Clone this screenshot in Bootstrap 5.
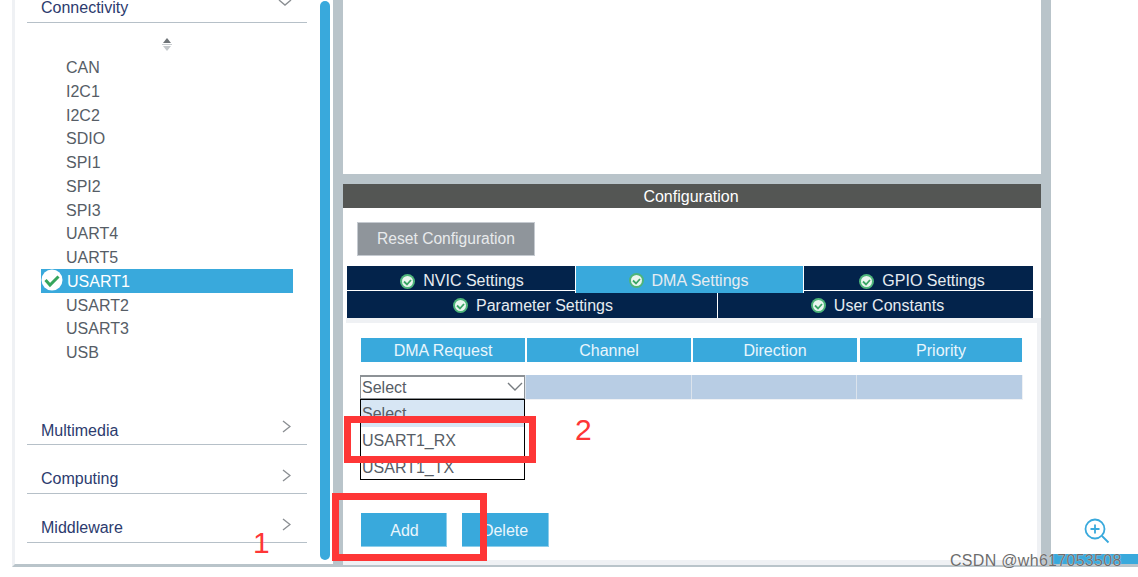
<!DOCTYPE html>
<html lang="en">

<head>
  <meta charset="UTF-8">
  <title>DMA Settings</title>
  <link href="https://cdn.jsdelivr.net/npm/bootstrap@5.3.0/dist/css/bootstrap.min.css" rel="stylesheet">
  <style>
    body {
      background: #fff;
      font-family: "Liberation Sans", Arial, sans-serif;
      font-size: 16px;
      width: 1138px;
      height: 577px;
      overflow: hidden;
      position: relative;
    }

    .app-root { width: 1138px; height: 577px; }

    /* left side */
    .left-wrap { width: 321px; margin-left: 12px; height: 567px; border-left: 3px solid #eff1f4; border-bottom: 3px solid #b9c4ca; }
    .left-panel { flex: 1; padding: 0 26px 0 12px; }
    .scroll-track { width: 16px; padding: 0 3px; height: 567px; border-bottom: 3px solid #b9c4ca; margin-left: -16px; }
    .scroll-thumb { width: 10px; height: 559px; background: #39a9dc; border-radius: 5px; margin-top: 1px; }
    .cat-head { border-bottom: 1px solid #b6c0c8; color: #2c3b6e; padding-left: 14px; padding-right: 16px; height: 23px; line-height: 16px; }
    .cat-head.cat-next { height: 24px; line-height: 18px; margin-top: 25px; }
    .cat-head.cat-next svg { margin-top: -1px; }
    .cat-head.multi-first { line-height: 20px; margin-top: 56.4px; }
    .chev-down { margin-right: -1px; }
    .sort-arrows { height: 19.4px; margin-top: 14px; }
    .periph-item { height: 23.7px; line-height: 23.7px; padding-left: 25px; margin-left: 14px; color: #565d66; }
    .periph-item.is-on { background: #39a9dc; color: #fff; height: 24px; line-height: 25px; margin-top: -.6px; margin-bottom: .6px; margin-right: 14px; padding-left: 26px; position: relative; }
    .periph-item.is-on svg { position: absolute; left: 0; top: 0; }

    /* center */
    .gutter { background: #b9c4ca; width: 10px; height: 567px; }
    .main-col { width: 698px; height: 567px; border-bottom: 2px solid #b9c4ca; }
    .top-blank { height: 174px; background: #fff; }
    .top-gap { height: 10px; background: #b9c4ca; margin-left: -1px; margin-right: -1px; }
    .conf-title { height: 24px; line-height: 25px; background: #545654; color: #fff; text-align: center; padding-right: 2px; }
    .conf-body { height: 357px; padding-top: 14px; }
    .reset-btn { display: block; width: 178px; height: 34px; margin-left: 14px; padding: 0; border: 1px solid #c5cad0; border-radius: 0; background: #8f959b; color: #e8eaec; font-size: 15.6px; }
    .reset-btn:hover { background: #8f959b; color: #e8eaec; border-color: #c5cad0; }
    .tab-block { margin: 10px 8px 0 4px; height: 52px; }
    .tab-line { height: 25px; }
    .tab-line + .tab-line { height: 27px; }
    .tab-cell { background: #03234b; color: #e6ecf1; display: flex; align-items: center; justify-content: center; gap: 8px; border-bottom: 1px solid #fff; padding-top: 6px; }
    .tab-line + .tab-line .tab-cell { border-bottom: 0; padding-top: 2px; }
    .tab-a { width: 228px; padding-left: 2px; }
    .tab-b { width: 229px; background: #39a9dc; height: 27px; z-index: 1; border-bottom: 0; border-left: 1px solid #fff; border-right: 1px solid #fff; padding-top: 2px; padding-right: 2px; }
    .tab-c { flex: 1; padding-left: 7px; }
    .tab-d { width: 370px; padding-left: 2px; }
    .tab-e { flex: 1; border-left: 1px solid #fff; padding-left: 4px; }
    .tab-panel { margin-left: 3px; border: solid #eff1f4; border-width: 5px 4px 0 0; height: 242px; padding: 15px 0 0 15px; position: relative; }
    .panel-foot { height: 5px; background: #eff1f4; }
    .dma-head { gap: 2px; width: 661px; }
    .dma-head > div { background: #39a9dc; color: #e9f6fc; text-align: center; height: 24px; line-height: 25px; flex: 0 0 164px; }
    .dma-head > div:last-child { flex: 0 0 162px; margin-left: 1px; }
    .dma-row { margin: 13px 0 0 -1px; width: 663px; height: 25px; position: relative; border-bottom: 1px solid #eff1f4; border-right: 1px solid #eff1f4; }
    .select-box { width: 165px; height: 25px; border: 1px solid #8d9296; border-top-width: 2px; border-bottom-width: 2px; background: #fff; color: #565d66; line-height: 21px; padding-left: 1px; position: relative; }
    .select-box svg { position: absolute; right: 1px; top: 5px; }
    .dma-cell { background: #b8cde4; height: 24px; flex: 1; border-left: 1px solid #dbe3ec; }
    .drop-list { position: absolute; left: 0; top: 24px; width: 165px; height: 81px; background: #fff; border: 1px solid #000; color: #565d66; z-index: 2; }
    .drop-list > div { height: 27px; line-height: 27px; padding-left: 1px; }
    .drop-list > div:first-child { background: #d7e6f4; }
    .action-row { margin-top: 113px; gap: 15px; }
    .action-btn { width: 87px; height: 34px; padding: 3px 0 0; border: 0; border-right: 1px solid #8ecdea; border-bottom: 1px solid #8ecdea; border-radius: 0; background: #39a9dc; color: #e9f6fc; font-size: 16px; }
    .action-btn:first-child { width: 86px; padding-left: 2px; }
    .action-btn:hover { background: #39a9dc; color: #e9f6fc; }

    /* right */
    .right-col { width: 87px; height: 567px; }
    .zoom-wrap { padding: 518px 0 0 33px; height: 554px; }
    .blue-strip { height: 10px; background: #39a9dc; }
    .grey-strip { height: 3px; background: #b9c4ca; }

    /* markup on top of the screenshot */
    .red-box { position: absolute; border: 7px solid #fe3636; z-index: 5; }
    .red-one { left: 344px; top: 416px; width: 192px; height: 47px; }
    .red-two { left: 332px; top: 493px; width: 155px; height: 68px; }
    .red-num { position: absolute; color: #fe3636; font-size: 30px; line-height: 30px; z-index: 5; }
    .num-one { left: 253px; top: 528px; }
    .num-two { left: 575px; top: 415px; }
    .csdn-mark { position: absolute; left: 950px; top: 552px; color: #6d6d6d; font-size: 16px; line-height: 18px; letter-spacing: .3px; text-shadow: 0 0 1px #fff; z-index: 6; }
  </style>
</head>

<body>
  <div class="app-root d-flex">
    <div class="left-wrap d-flex">
      <div class="left-panel">
        <div class="cat-head d-flex justify-content-between">
          <span>Connectivity</span>
          <svg width="14" height="8" viewBox="0 0 14 8" class="chev-down"><path d="M1 0l6 5 6-5" fill="none" stroke="#8b8f93" stroke-width="1.4"/></svg>
        </div>
        <div class="sort-arrows d-flex justify-content-center">
          <svg width="12" height="16" viewBox="0 0 12 16"><path d="M6 1l4 5H2z" fill="#6f7478"/><path d="M1 7h10v1H1z" fill="#c9cdd0"/><path d="M2 9h8l-4 5z" fill="#c4c8cb"/></svg>
        </div>
        <div class="periph-wrap">
          <div class="periph-item">CAN</div>
          <div class="periph-item">I2C1</div>
          <div class="periph-item">I2C2</div>
          <div class="periph-item">SDIO</div>
          <div class="periph-item">SPI1</div>
          <div class="periph-item">SPI2</div>
          <div class="periph-item">SPI3</div>
          <div class="periph-item">UART4</div>
          <div class="periph-item">UART5</div>
          <div class="periph-item is-on">
            <svg width="22" height="22" viewBox="0 0 22 22"><circle cx="11" cy="11" r="10.5" fill="#fff"/><path d="M4.5 11l4.500 5 8.500-8.500" fill="none" stroke="#36a55c" stroke-width="3"/></svg>
            USART1
          </div>
          <div class="periph-item">USART2</div>
          <div class="periph-item">USART3</div>
          <div class="periph-item">USB</div>
        </div>
        <div class="cat-head cat-next multi-first d-flex justify-content-between">
          <span>Multimedia</span>
          <svg width="9" height="14" viewBox="0 0 9 14"><path d="M1 1l7 5.500-7 5.500" fill="none" stroke="#8b8f93" stroke-width="1.400"/></svg>
        </div>
        <div class="cat-head cat-next d-flex justify-content-between">
          <span>Computing</span>
          <svg width="9" height="14" viewBox="0 0 9 14"><path d="M1 1l7 5.500-7 5.500" fill="none" stroke="#8b8f93" stroke-width="1.400"/></svg>
        </div>
        <div class="cat-head cat-next d-flex justify-content-between">
          <span>Middleware</span>
          <svg width="9" height="14" viewBox="0 0 9 14"><path d="M1 1l7 5.500-7 5.500" fill="none" stroke="#8b8f93" stroke-width="1.400"/></svg>
        </div>
      </div>
    </div>
    <div class="scroll-track flex-shrink-0"><div class="scroll-thumb"></div></div>
    <div class="gutter flex-shrink-0"></div>

    <div class="main-col flex-shrink-0">
      <div class="top-blank"></div>
      <div class="top-gap"></div>
      <div class="conf-title">Configuration</div>
      <div class="conf-body">
        <button class="btn reset-btn">Reset Configuration</button>
        <div class="tab-block">
          <div class="tab-line d-flex">
            <div class="tab-cell tab-a"><svg width="15" height="15" viewBox="0 0 15 15"><circle cx="7.5" cy="7.5" r="7.5" fill="#4eb57a"/><circle cx="7.5" cy="7.5" r="5.5" fill="#eaf6ef"/><path d="M4 7.5l3 3 4-4.500" fill="none" stroke="#3aa565" stroke-width="1.800"/></svg>NVIC Settings</div>
            <div class="tab-cell tab-b"><svg width="15" height="15" viewBox="0 0 15 15"><circle cx="7.5" cy="7.5" r="7.5" fill="#4eb57a"/><circle cx="7.5" cy="7.5" r="5.5" fill="#eaf6ef"/><path d="M4 7.5l3 3 4-4.500" fill="none" stroke="#3aa565" stroke-width="1.800"/></svg>DMA Settings</div>
            <div class="tab-cell tab-c"><svg width="15" height="15" viewBox="0 0 15 15"><circle cx="7.5" cy="7.5" r="7.5" fill="#4eb57a"/><circle cx="7.5" cy="7.5" r="5.5" fill="#eaf6ef"/><path d="M4 7.5l3 3 4-4.500" fill="none" stroke="#3aa565" stroke-width="1.800"/></svg>GPIO Settings</div>
          </div>
          <div class="tab-line d-flex">
            <div class="tab-cell tab-d"><svg width="15" height="15" viewBox="0 0 15 15"><circle cx="7.5" cy="7.5" r="7.5" fill="#4eb57a"/><circle cx="7.5" cy="7.5" r="5.5" fill="#eaf6ef"/><path d="M4 7.5l3 3 4-4.500" fill="none" stroke="#3aa565" stroke-width="1.800"/></svg>Parameter Settings</div>
            <div class="tab-cell tab-e"><svg width="15" height="15" viewBox="0 0 15 15"><circle cx="7.5" cy="7.5" r="7.5" fill="#4eb57a"/><circle cx="7.5" cy="7.5" r="5.5" fill="#eaf6ef"/><path d="M4 7.5l3 3 4-4.500" fill="none" stroke="#3aa565" stroke-width="1.800"/></svg>User Constants</div>
          </div>
        </div>
        <div class="tab-panel">
          <div class="dma-head d-flex">
            <div>DMA Request</div>
            <div>Channel</div>
            <div>Direction</div>
            <div>Priority</div>
          </div>
          <div class="dma-row d-flex">
            <div class="select-box">Select
              <svg width="16" height="10" viewBox="0 0 16 10"><path d="M1 1l7 7 7-7" fill="none" stroke="#777c80" stroke-width="1.400"/></svg>
            </div>
            <div class="dma-cell"></div>
            <div class="dma-cell"></div>
            <div class="dma-cell"></div>
            <div class="drop-list">
              <div>Select</div>
              <div>USART1_RX</div>
              <div>USART1_TX</div>
            </div>
          </div>
          <div class="action-row d-flex">
            <button class="btn action-btn">Add</button>
            <button class="btn action-btn">Delete</button>
          </div>
        </div>
        <div class="panel-foot"></div>
      </div>
    </div>

    <div class="gutter flex-shrink-0"></div>
    <div class="right-col flex-shrink-0">
      <div class="zoom-wrap">
        <svg width="28" height="28" viewBox="0 0 28 28"><circle cx="11" cy="11" r="9.5" fill="none" stroke="#39a9dc" stroke-width="1.800"/><path d="M11 6.500v9M6.500 11h9M18 18l6.500 6.500" fill="none" stroke="#39a9dc" stroke-width="1.800"/></svg>
      </div>
      <div class="blue-strip"></div>
      <div class="grey-strip"></div>
    </div>
  </div>

  <div class="red-box red-one"></div>
  <div class="red-box red-two"></div>
  <div class="red-num num-one">1</div>
  <div class="red-num num-two">2</div>
  <div class="csdn-mark">CSDN @wh617053508</div>

  <script src="https://cdn.jsdelivr.net/npm/bootstrap@5.3.0/dist/js/bootstrap.bundle.min.js"></script>
</body>

</html>
